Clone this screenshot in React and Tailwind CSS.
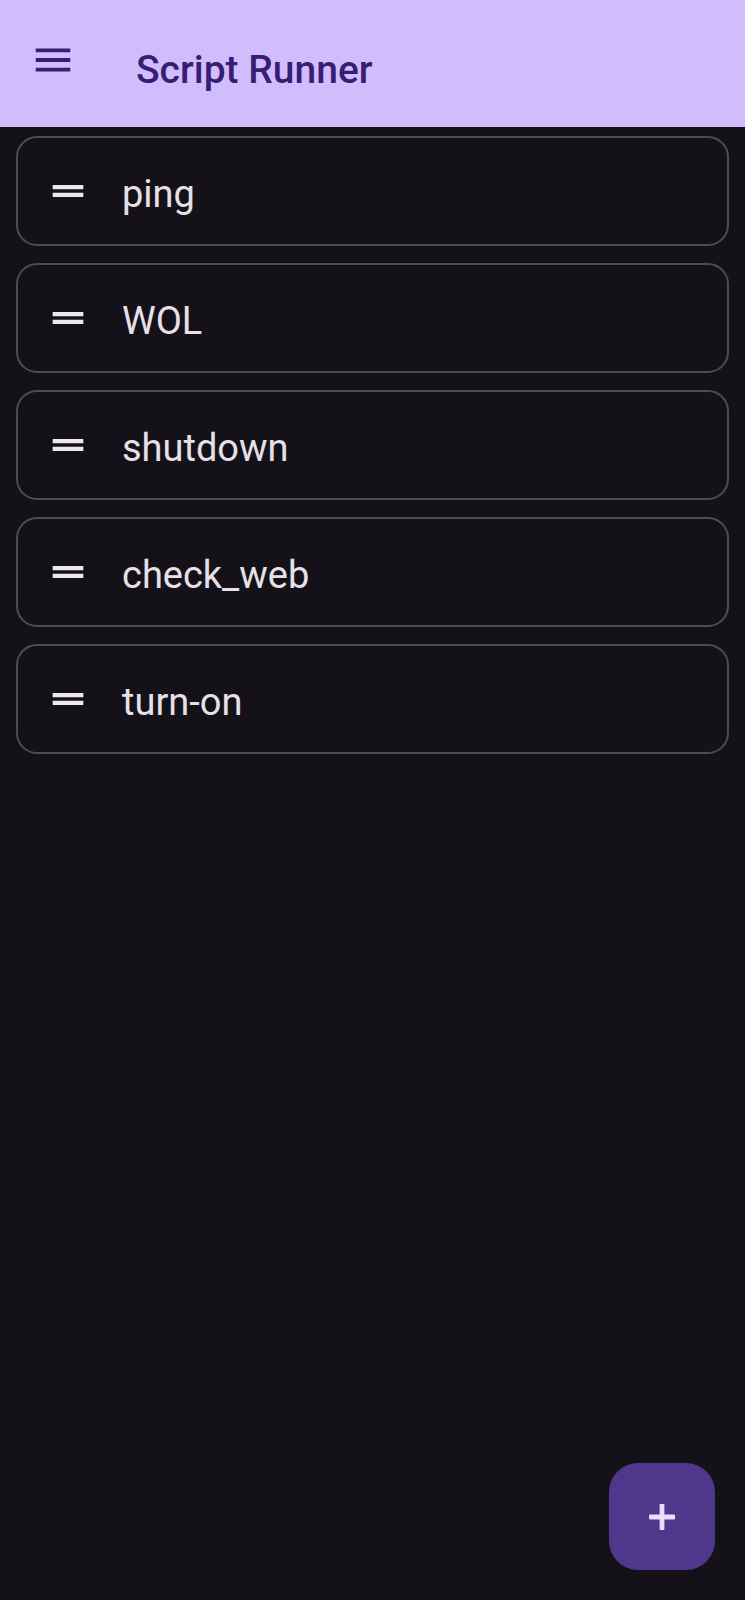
import React from "react";

const items = ["ping", "WOL", "shutdown", "check_web", "turn-on"];

function MenuIcon() {
  return (
    <svg viewBox="0 0 24 24" className="w-[46px] h-[46px] shrink-0" fill="#381E72">
      <path d="M3 18h18v-2H3v2zm0-5h18v-2H3v2zm0-7v2h18V6H3z" />
    </svg>
  );
}

function DragHandle() {
  return (
    <svg viewBox="0 0 24 24" className="w-[46px] h-[46px] shrink-0" fill="#ECE6F0">
      <path d="M20 8.9H4v2.2h16V8.9zM4 15.1h16v-2.2H4v2.2z" />
    </svg>
  );
}

function PlusIcon() {
  return (
    <svg viewBox="0 0 26 26" className="w-[26px] h-[26px]" fill="#EADDFF">
      <rect x="10.6" y="0" width="4.8" height="26" rx="0.8" />
      <rect x="0" y="10.6" width="26" height="4.8" rx="0.8" />
    </svg>
  );
}

export default function App() {
  return (
    <div
      className="relative w-[745px] h-[1600px] bg-[#141218] overflow-hidden"
      style={{ fontFamily: "Roboto, 'Liberation Sans', sans-serif" }}
    >
      <header className="h-[127px] bg-[#D1BCFE] flex items-start pl-[30px] pt-[37px]">
        <MenuIcon />
        <h1 className="ml-[60px] mt-[9px] text-[39px] leading-[48px] font-medium text-[#381E72]">
          Script Runner
        </h1>
      </header>
      <main className="flex flex-col gap-[17px] px-[16px] pt-[9px]">
        {items.map((name) => (
          <div
            key={name}
            className="h-[110px] rounded-[21px] border-2 border-[#4F4B55] bg-[#141218] flex items-center pl-[27px]"
          >
            <DragHandle />
            <span className="ml-[31px] mt-[6px] text-[38px] leading-[48px] text-[#E6E0E9]">{name}</span>
          </div>
        ))}
      </main>
      <button className="absolute right-[30px] bottom-[30px] w-[106px] h-[107px] rounded-[29px] bg-[#4F378B] flex items-center justify-center">
        <PlusIcon />
      </button>
    </div>
  );
}
